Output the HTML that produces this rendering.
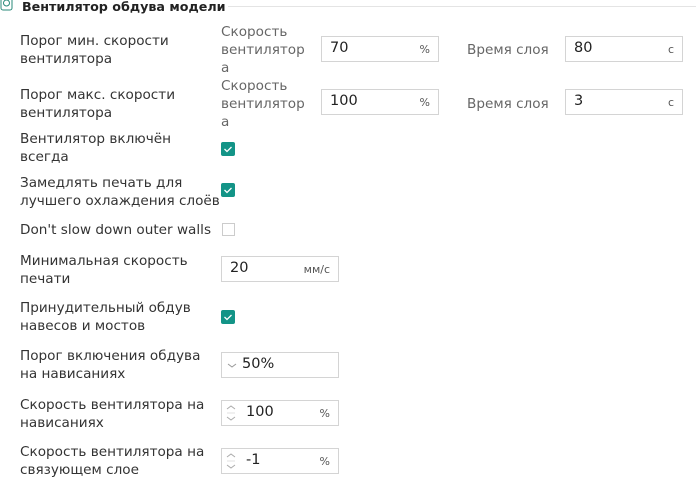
<!DOCTYPE html><html><head><meta charset="utf-8"><style>
body{margin:0;width:696px;height:469px;overflow:hidden;background:#fff;font-family:"DejaVu Sans",sans-serif;font-size:13.6px;color:#333;position:relative}
.a{position:absolute;line-height:18px;white-space:nowrap}
.g{color:#666}
.in{position:absolute;width:118px;height:26px;border:1px solid #d4d4d4;box-sizing:border-box;background:#fff}
.in .v{position:absolute;left:8px;top:3px;font-size:14.5px;color:#222}
.in .u{position:absolute;right:8px;top:6px;font-size:11px;color:#555}
.cb{position:absolute;width:14px;height:14px;border-radius:2px;background:#139487}
.cb svg{position:absolute;left:0;top:0}
.ecb{position:absolute;width:13px;height:13px;border:1px solid #ccc;box-sizing:border-box}
.sp{position:absolute;left:4px;top:2px}
</style></head><body>
<svg style="position:absolute;left:0;top:0" width="14" height="12"><rect x="1" y="-2" width="11" height="12" rx="2" fill="none" stroke="#2a8a7a"/><circle cx="6.5" cy="3" r="3" fill="none" stroke="#2a8a7a"/></svg>
<div class="a" style="left:22px;top:-2px;font-weight:bold;font-size:12.7px;color:#222">Вентилятор обдува модели</div>
<div style="position:absolute;left:228px;top:6px;width:468px;height:1px;background:#e4e4e4"></div>

<div class="a" style="left:20px;top:32px">Порог мин. скорости<br>вентилятора</div>
<div class="a g" style="left:221px;top:23px">Скорость<br>вентилятор<br>а</div>
<div class="in" style="left:321px;top:36px"><span class="v">70</span><span class="u">%</span></div>
<div class="a g" style="left:467px;top:41px">Время слоя</div>
<div class="in" style="left:565px;top:36px"><span class="v">80</span><span class="u">c</span></div>

<div class="a" style="left:20px;top:86px">Порог макс. скорости<br>вентилятора</div>
<div class="a g" style="left:221px;top:77px">Скорость<br>вентилятор<br>а</div>
<div class="in" style="left:321px;top:89px"><span class="v">100</span><span class="u">%</span></div>
<div class="a g" style="left:467px;top:95px">Время слоя</div>
<div class="in" style="left:565px;top:89px"><span class="v">3</span><span class="u">c</span></div>

<div class="a" style="left:20px;top:130px">Вентилятор включён<br>всегда</div>
<div class="cb" style="left:221px;top:142px"><svg width="14" height="14"><path d="M3.5 7l2.5 2.5 4.5-4.5" stroke="#fff" stroke-width="1.3" fill="none"/></svg></div>

<div class="a" style="left:20px;top:174px">Замедлять печать для<br>лучшего охлаждения слоёв</div>
<div class="cb" style="left:221px;top:183px"><svg width="14" height="14"><path d="M3.5 7l2.5 2.5 4.5-4.5" stroke="#fff" stroke-width="1.3" fill="none"/></svg></div>

<div class="a" style="left:20px;top:221px">Don't slow down outer walls</div>
<div class="ecb" style="left:222px;top:223px"></div>

<div class="a" style="left:20px;top:252px">Минимальная скорость<br>печати</div>
<div class="in" style="left:221px;top:256px"><span class="v">20</span><span class="u">мм/с</span></div>

<div class="a" style="left:20px;top:299px">Принудительный обдув<br>навесов и мостов</div>
<div class="cb" style="left:221px;top:310px"><svg width="14" height="14"><path d="M3.5 7l2.5 2.5 4.5-4.5" stroke="#fff" stroke-width="1.3" fill="none"/></svg></div>

<div class="a" style="left:20px;top:347px">Порог включения обдува<br>на нависаниях</div>
<div class="in" style="left:221px;top:352px"><svg style="position:absolute;left:5px;top:10px" width="10" height="6"><path d="M1 1l4 3 4-3" stroke="#999" fill="none"/></svg><span class="v" style="left:20px">50%</span></div>

<div class="a" style="left:20px;top:396px">Скорость вентилятора на<br>нависаниях</div>
<div class="in" style="left:221px;top:400px"><svg class="sp" width="10" height="20"><path d="M1 6l4-3 4 3M1 14l4 3 4-3" stroke="#aaa" fill="none"/><path d="M1 10h8" stroke="#e0e0e0"/></svg><span class="v" style="left:24px">100</span><span class="u">%</span></div>

<div class="a" style="left:20px;top:443px">Скорость вентилятора на<br>связующем слое</div>
<div class="in" style="left:221px;top:448px"><svg class="sp" width="10" height="20"><path d="M1 6l4-3 4 3M1 14l4 3 4-3" stroke="#aaa" fill="none"/><path d="M1 10h8" stroke="#e0e0e0"/></svg><span class="v" style="left:24px">-1</span><span class="u">%</span></div>
</body></html>
